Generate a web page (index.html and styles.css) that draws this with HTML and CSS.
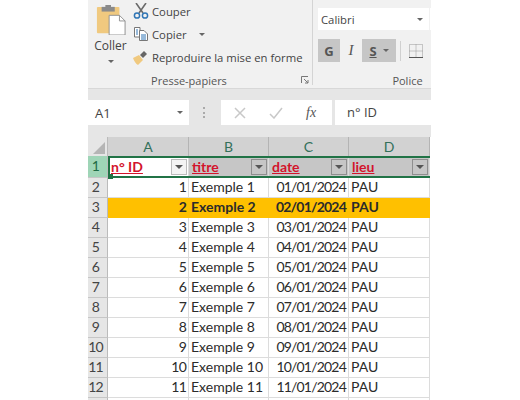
FILE: index.html
```html
<!DOCTYPE html>
<html lang="fr">

<head>
    <meta charset="utf-8">
    <title>Classeur</title>
    <link rel="stylesheet" href="styles.css">
</head>

<body>
    <div id="excel">
        <div class="ribbon">
            <div class="group clipboard">
                <div class="group-body">
                    <div class="paste">
                        <svg width="30" height="30" viewBox="0 0 32 32">
                            <rect x="1" y="2" width="24" height="28" rx="1" fill="#f0c97f" />
                            <rect x="6" y="2" width="14" height="5" fill="#8a8a8a" />
                            <rect x="10" y="0" width="6" height="4" fill="#8a8a8a" />
                            <path d="M14 11H25L31 17V32H14Z" fill="#fff" stroke="#8f8f8f" />
                            <path d="M25 11V17H31" fill="none" stroke="#8f8f8f" />
                        </svg>
                        <span class="paste-label">Coller</span>
                        <span class="caret"></span>
                    </div>
                    <div class="clip-list">
                        <div class="clip-item">
                            <svg width="16" height="16" viewBox="0 0 16 16">
                                <path d="M3 0L10 10M13 0L6 10" stroke="#6b6b6b" stroke-width="1.6" fill="none" />
                                <circle cx="4" cy="12.5" r="2.6" fill="none" stroke="#2f75b5" stroke-width="1.5" />
                                <circle cx="12" cy="12.5" r="2.6" fill="none" stroke="#2f75b5" stroke-width="1.5" />
                            </svg>
                            <span>Couper</span>
                        </div>
                        <div class="clip-item">
                            <svg width="16" height="16" viewBox="0 0 16 16">
                                <path d="M1.5 1.5H7V11H1.5Z" fill="#fff" stroke="#777" />
                                <path d="M6.5 4.5H11L14.500 8V14.500H6.500Z" fill="#fff" stroke="#777" />
                                <path d="M3 4H5M3 6H5M3 8H5M8 9H13M8 11H13M8 13H13" stroke="#2f75b5" />
                            </svg>
                            <span>Copier</span>
                            <span class="caret copy-caret"></span>
                        </div>
                        <div class="clip-item">
                            <svg width="16" height="16" viewBox="0 0 16 16">
                                <path d="M0 9L6 6L10 11L5 16C3 15 1 12 0 9Z" fill="#f0c97f" />
                                <path d="M7 6L11 2L14 5L10 9Z" fill="#666" />
                            </svg>
                            <span>Reproduire la mise en forme</span>
                        </div>
                    </div>
                </div>
                <div class="group-label clip-label">Presse-papiers</div>
                <svg class="launcher" width="8" height="8" viewBox="0 0 8 8">
                    <path d="M0.500 7V0.500H7M3 3L7 7M7 4V7H4" fill="none" stroke="#777" />
                </svg>
            </div>
            <div class="group font">
                <div class="font-boxes">
                    <div class="font-name">
                        <span>Calibri</span>
                        <span class="caret"></span>
                    </div>
                    <div class="font-size"></div>
                </div>
                <div class="font-tools">
                    <span class="tool on bold">G</span>
                    <span class="tool italic">I</span>
                    <span class="tool on underline">
                        <b>S</b>
                        <span class="caret"></span>
                    </span>
                    <span class="tool-sep"></span>
                    <svg class="borders" width="14" height="14" viewBox="0 0 14 14">
                        <path d="M0.500 0.500H13.500V13.500H0.500ZM0.500 7H13.500M7 0.500V13.500" fill="none" stroke="#999" stroke-dasharray="1 1" />
                        <path d="M0 13.500H14" stroke="#555" />
                    </svg>
                    <span class="caret"></span>
                </div>
                <div class="group-label font-label">Police</div>
            </div>
        </div>

        <div class="formula-bar">
            <div class="name-box">
                <span>A1</span>
                <span class="caret"></span>
            </div>
            <div class="dots"></div>
            <div class="formula-tools">
                <svg width="12" height="12" viewBox="0 0 12 12">
                    <path d="M1 1L11 11M11 1L1 11" stroke="#c8c8c8" stroke-width="1.5" />
                </svg>
                <svg width="14" height="12" viewBox="0 0 14 12">
                    <path d="M1 7L5 11L13 1" stroke="#c8c8c8" stroke-width="1.500" fill="none" />
                </svg>
                <span class="fx">fx</span>
            </div>
            <div class="formula-input">n° ID</div>
        </div>

        <div class="sheet">
            <div class="corner"><span class="triangle"></span></div>
            <div class="col-head">A</div>
            <div class="col-head">B</div>
            <div class="col-head">C</div>
            <div class="col-head">D</div>

            <div class="row-head active">1</div>
            <div class="cell th first">n° ID<span class="filter"></span></div>
            <div class="cell th">titre<span class="filter"></span></div>
            <div class="cell th">date<span class="filter"></span></div>
            <div class="cell th">lieu<span class="filter"></span></div>

            <div class="row-head">2</div>
            <div class="cell num">1</div><div class="cell">Exemple 1</div><div class="cell num">01/01/2024</div><div class="cell">PAU</div>
            <div class="row-head">3</div>
            <div class="cell num mark">2</div><div class="cell mark">Exemple 2</div><div class="cell num mark">02/01/2024</div><div class="cell mark">PAU</div>
            <div class="row-head">4</div>
            <div class="cell num">3</div><div class="cell">Exemple 3</div><div class="cell num">03/01/2024</div><div class="cell">PAU</div>
            <div class="row-head">5</div>
            <div class="cell num">4</div><div class="cell">Exemple 4</div><div class="cell num">04/01/2024</div><div class="cell">PAU</div>
            <div class="row-head">6</div>
            <div class="cell num">5</div><div class="cell">Exemple 5</div><div class="cell num">05/01/2024</div><div class="cell">PAU</div>
            <div class="row-head">7</div>
            <div class="cell num">6</div><div class="cell">Exemple 6</div><div class="cell num">06/01/2024</div><div class="cell">PAU</div>
            <div class="row-head">8</div>
            <div class="cell num">7</div><div class="cell">Exemple 7</div><div class="cell num">07/01/2024</div><div class="cell">PAU</div>
            <div class="row-head">9</div>
            <div class="cell num">8</div><div class="cell">Exemple 8</div><div class="cell num">08/01/2024</div><div class="cell">PAU</div>
            <div class="row-head">10</div>
            <div class="cell num">9</div><div class="cell">Exemple 9</div><div class="cell num">09/01/2024</div><div class="cell">PAU</div>
            <div class="row-head">11</div>
            <div class="cell num">10</div><div class="cell">Exemple 10</div><div class="cell num">10/01/2024</div><div class="cell">PAU</div>
            <div class="row-head">12</div>
            <div class="cell num">11</div><div class="cell">Exemple 11</div><div class="cell num">11/01/2024</div><div class="cell">PAU</div>
            <div class="row-head"></div>
            <div class="cell"></div><div class="cell"></div><div class="cell"></div><div class="cell"></div>

            <div class="selection"><span class="handle"></span></div>
        </div>
    </div>
</body>

</html>
```

FILE: styles.css
```css
body {
    margin: 0;
    background-color: #fff;
    font-family: "Open Sans", "Liberation Sans", sans-serif;
    color: #444;
}

#excel {
    width: 343px;
    height: 400px;
    margin-left: 88px;
    overflow: hidden;
    background-color: #e6e6e6;
}

.caret {
    display: inline-block;
    width: 0;
    height: 0;
    border-left: 3px solid transparent;
    border-right: 3px solid transparent;
    border-top: 3px solid #666;
}

/* ruban */
.ribbon {
    display: flex;
    height: 88px;
    background-color: #f1f1f1;
    border-bottom: 1px solid #d8d8d8;
}

.group {
    position: relative;
    display: flex;
    flex-direction: column;
}

.clipboard {
    flex: none;
    width: 224px;
    border-right: 1px solid #d4d4d4;
    height: 85px;
}

.group-body {
    display: flex;
    flex: none;
    height: 73px;
}

.group-label {
    font-size: 11px;
    line-height: 16px;
    text-align: center;
    color: #555;
}

.clip-label {
    padding-right: 22px;
}

.launcher {
    position: absolute;
    right: 3px;
    bottom: 1px;
}

.paste {
    width: 45px;
    padding-top: 5px;
    display: flex;
    flex-direction: column;
    align-items: center;
}

.paste-label {
    font-size: 12px;
    line-height: 16px;
    margin-top: 3px;
}

.paste .caret {
    margin-top: 6px;
}

.clip-list {
    display: flex;
    flex-direction: column;
    gap: 3px;
    padding-top: 1px;
}

.clip-item {
    display: flex;
    align-items: center;
    gap: 3px;
    height: 20px;
    font-size: 11.3px;
    white-space: nowrap;
}

.clip-item svg {
    flex-shrink: 0;
}

.copy-caret {
    margin-left: 9px;
}

.font {
    flex: 1;
    padding-left: 5px;
}

.font-boxes {
    display: flex;
    gap: 1px;
    margin-top: 8px;
}

.font-name {
    display: flex;
    align-items: center;
    justify-content: space-between;
    flex: none;
    width: 111px;
    height: 22px;
    box-sizing: border-box;
    padding: 0 6px 0 3px;
    background-color: #fff;
    font-size: 11.3px;
}

.font-size {
    flex: 1;
    background-color: #fff;
}

.font-tools {
    display: flex;
    align-items: center;
    margin-top: 9px;
    height: 23px;
}

.tool {
    display: flex;
    align-items: center;
    justify-content: center;
    width: 22px;
    height: 23px;
    font-size: 13px;
    font-family: "Liberation Serif", serif;
    color: #555;
}

.tool.on {
    background-color: #c6c6c6;
}

.bold {
    font-family: "Open Sans", sans-serif;
    font-weight: 700;
}

.italic {
    font-style: italic;
    font-size: 15px;
}

.underline {
    width: 34px;
    gap: 6px;
    font-family: "Open Sans", sans-serif;
    text-decoration: underline;
}

.tool-sep {
    width: 1px;
    height: 20px;
    margin: 0 8px 0 4px;
    background-color: #d0d0d0;
}

.font-tools .borders {
    margin-right: 8px;
}

.font-label {
    margin-top: 11px;
    padding-left: 60px;
}

/* barre de formule */
.formula-bar {
    display: flex;
    height: 26px;
    margin-top: 11px;
}

.name-box {
    display: flex;
    align-items: center;
    justify-content: space-between;
    width: 101px;
    box-sizing: border-box;
    padding: 0 6px 0 7px;
    height: 25px;
    background-color: #fff;
    font-size: 13px;
}

.dots {
    width: 2px;
    height: 11px;
    margin: 7px 14px 0 14px;
    border-left: 2px dotted #aaa;
}

.formula-tools {
    display: flex;
    align-items: center;
    gap: 23px;
    width: 111px;
    box-sizing: border-box;
    padding-left: 13px;
    height: 25px;
    background-color: #fff;
}

.fx {
    font-family: "Liberation Serif", serif;
    font-style: italic;
    font-size: 14px;
    color: #555;
}

.formula-input {
    flex: 1;
    height: 25px;
    margin-left: 3px;
    padding-left: 12px;
    line-height: 25px;
    background-color: #fff;
    font-size: 13px;
}

/* feuille */
.sheet {
    position: relative;
    display: grid;
    grid-template-columns: 20px 81px 80px 80px 81px;
    grid-template-rows: 19px 22px repeat(12, 20px);
    margin-top: 11px;
    font-family: Lato, "Open Sans", sans-serif;
    font-size: 14px;
    background-color: #fff;
}

.corner {
    display: flex;
    align-items: flex-end;
    justify-content: flex-end;
    padding: 0 2px 2px 0;
    background-color: #e6e6e6;
    border-right: 1px solid #bbb;
}

.triangle {
    width: 0;
    height: 0;
    border-left: 12px solid transparent;
    border-bottom: 12px solid #b5b5b5;
}

.col-head {
    display: flex;
    align-items: center;
    justify-content: center;
    background-color: #d2d2d2;
    border-right: 1px solid #b4b4b4;
    color: #33705a;
    font-size: 14px;
}

.row-head {
    display: flex;
    align-items: center;
    justify-content: center;
    padding: 0 4px 2px 0;
    letter-spacing: -0.8px;
    background-color: #e6e6e6;
    border-right: 1px solid #bbb;
    border-bottom: 1px solid #c6c6c6;
    color: #444;
}

.row-head.active {
    background-color: #9fd5b7;
    color: #1f6b45;
}

.cell {
    display: flex;
    align-items: center;
    padding: 0 2px 2px;
    border-right: 1px solid #dcdcdc;
    border-bottom: 1px solid #dcdcdc;
    color: #2b2b2b;
    white-space: nowrap;
}

.num {
    justify-content: flex-end;
    letter-spacing: -0.8px;
}

.mark {
    background-color: #ffc000;
    border-color: #ffc000;
    font-weight: 700;
}

.th {
    justify-content: space-between;
    background-color: #c6c6c6;
    color: #d3142c;
    font-weight: 700;
    text-decoration: underline;
    padding: 0 1px 0 3px;
}

.th.first {
    background-color: #fff;
}

.filter {
    display: flex;
    align-items: center;
    justify-content: center;
    width: 16px;
    height: 16px;
    box-sizing: border-box;
    background-color: #c6c6c6;
    border: 1px solid #8f8f8f;
}

.filter::after {
    content: "";
    border-left: 4px solid transparent;
    border-right: 4px solid transparent;
    border-top: 4px solid #555;
}

.first .filter {
    background-color: #f4f4f4;
    border-color: #bdbdbd;
}

.selection {
    position: absolute;
    inset: 0;
    grid-column: 2 / -1;
    grid-row: 2 / 3;
    border: 2px solid #217346;
    border-right: none;
    pointer-events: none;
}

.handle {
    position: absolute;
    left: -2px;
    bottom: -3px;
    width: 5px;
    height: 5px;
    background-color: #217346;
}
```
